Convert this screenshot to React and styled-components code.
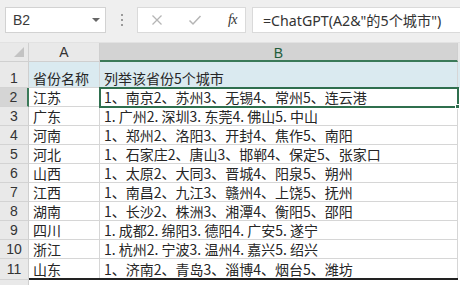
import React from "react";
import styled, { createGlobalStyle } from "styled-components";

const Global = createGlobalStyle`
  html, body { margin: 0; padding: 0; background: #ffffff; }
  body { width: 460px; height: 285px; overflow: hidden; font-family: "Noto Sans CJK SC", "Noto Sans", sans-serif; }
  * { box-sizing: border-box; }
`;

const Page = styled.div`
  width: 460px;
  height: 285px;
  overflow: hidden;
  background: #fff;
`;

const Toolbar = styled.div`
  display: flex;
  align-items: flex-start;
  height: 43px;
  padding: 7px 0 0 5px;
  background: #efefef;
  border-bottom: 1px solid #e2e2e2;
`;

const NameBox = styled.div`
  position: relative;
  width: 101px;
  height: 26px;
  background: #fff;
  border: 1px solid #d2d2d2;
  display: flex;
  align-items: center;
  padding-left: 7px;
  font-family: "Liberation Sans", Arial, sans-serif;
  font-size: 14px;
  color: #3a3a3a;
`;

const Caret = styled.span`
  position: absolute;
  right: 5px;
  top: 10px;
  width: 0;
  height: 0;
  border-left: 4px solid transparent;
  border-right: 4px solid transparent;
  border-top: 4px solid #666;
`;

const Grip = styled.div`
  width: 31px;
  height: 26px;
  display: flex;
  flex-direction: column;
  align-items: center;
  justify-content: center;
  gap: 3px;
`;

const Dot = styled.span`
  width: 2px;
  height: 2px;
  background: #9a9a9a;
`;

const ActionBox = styled.div`
  width: 109px;
  height: 26px;
  background: #fff;
  border: 1px solid #dadada;
  display: flex;
  align-items: center;
  justify-content: space-between;
  padding: 0 8px 0 13px;
`;

const Fx = styled.span`
  font-family: "Liberation Serif", "Times New Roman", serif;
  font-style: italic;
  font-size: 14px;
  color: #333;
  letter-spacing: -0.5px;
`;

const FormulaInput = styled.div`
  flex: 1;
  height: 26px;
  margin-left: 6px;
  background: #fff;
  border: 1px solid #dadada;
  border-right: none;
  display: flex;
  align-items: center;
  padding-left: 10px;
  font-family: "Noto Sans", "Noto Sans CJK SC", sans-serif;
  font-size: 14.2px;
  color: #333;
  white-space: nowrap;
`;

const Sheet = styled.div`
  display: grid;
  grid-template-columns: 29px 71px 358px 2px;
  grid-template-rows: 19px 26px repeat(10, 19px) 2px 8px;
`;

const Corner = styled.div`
  position: relative;
  background: #e9e9e9;
  border-right: 1px solid #d0d0d0;
  border-bottom: 1px solid #d0d0d0;
  &::after {
    content: "";
    position: absolute;
    right: 4px;
    bottom: 4px;
    width: 0;
    height: 0;
    border-left: 10px solid transparent;
    border-bottom: 10px solid #c3c3c3;
  }
`;

const ColHead = styled.div`
  display: flex;
  align-items: center;
  justify-content: center;
  font-family: "Liberation Sans", Arial, sans-serif;
  font-size: 14px;
  background: ${(p) => (p.$active ? "#d3d3d3" : "#e9e9e9")};
  color: ${(p) => (p.$active ? "#1f5d3a" : "#333")};
  border-right: 1px solid #cfcfcf;
  border-bottom: ${(p) => (p.$active ? "2px solid #3b7a59" : "1px solid #cfcfcf")};
  padding-top: ${(p) => (p.$active ? "2px" : "0")};
`;

const Filler = styled.div`
  background: ${(p) => p.$bg || "#fff"};
`;

const RowHead = styled.div`
  display: flex;
  align-items: flex-end;
  justify-content: center;
  font-family: "Liberation Sans", Arial, sans-serif;
  font-size: 14px;
  line-height: 17px;
  color: #333;
  background: ${(p) => (p.$active ? "#d5d5d5" : "#e9e9e9")};
  border-bottom: ${(p) => (p.$last ? "none" : "1px solid #d3d3d3")};
  border-right: ${(p) => (p.$active ? "2px solid #3b7a59" : "1px solid #cfcfcf")};
`;

const BottomRule = styled.div`
  background: #222;
`;

const Cell = styled.div`
  position: relative;
  display: flex;
  align-items: flex-end;
  padding: 0 0 0 4px;
  font-size: 14px;
  line-height: 17px;
  color: #262626;
  white-space: nowrap;
  overflow: visible;
  background: ${(p) => (p.$header ? "#daeaf0" : "#fff")};
  border-right: 1px solid #d6d6d6;
  border-bottom: ${(p) => (p.$last ? "none" : "1px solid #d6d6d6")};
  ${(p) =>
    p.$selected &&
    `
    outline: 2px solid #2f6f4e;
    outline-offset: -1px;
    z-index: 1;
  `}
`;

const Handle = styled.span`
  position: absolute;
  right: -3px;
  bottom: -3px;
  width: 5px;
  height: 5px;
  background: #2f6f4e;
  border: 1px solid #fff;
`;

const rows = [
  ["江苏", "1、南京2、苏州3、无锡4、常州5、连云港"],
  ["广东", "1. 广州2. 深圳3. 东莞4. 佛山5. 中山"],
  ["河南", "1、郑州2、洛阳3、开封4、焦作5、南阳"],
  ["河北", "1、石家庄2、唐山3、邯郸4、保定5、张家口"],
  ["山西", "1、太原2、大同3、晋城4、阳泉5、朔州"],
  ["江西", "1、南昌2、九江3、赣州4、上饶5、抚州"],
  ["湖南", "1、长沙2、株洲3、湘潭4、衡阳5、邵阳"],
  ["四川", "1. 成都2. 绵阳3. 德阳4. 广安5. 遂宁"],
  ["浙江", "1. 杭州2. 宁波3. 温州4. 嘉兴5. 绍兴"],
  ["山东", "1、济南2、青岛3、淄博4、烟台5、潍坊"],
];

const XIcon = () => (
  <svg width="12" height="12" viewBox="0 0 12 12">
    <path d="M1.5 1.5 L10.5 10.5 M10.5 1.5 L1.5 10.5" stroke="#b5b5b5" strokeWidth="1.3" fill="none" />
  </svg>
);

const CheckIcon = () => (
  <svg width="14" height="12" viewBox="0 0 14 12">
    <path d="M1.5 6.5 L5 10 L12.5 2" stroke="#b5b5b5" strokeWidth="1.5" fill="none" />
  </svg>
);

export default function App() {
  return (
    <Page>
      <Global />
      <Toolbar>
        <NameBox>
          B2
          <Caret />
        </NameBox>
        <Grip>
          <Dot />
          <Dot />
          <Dot />
        </Grip>
        <ActionBox>
          <XIcon />
          <CheckIcon />
          <Fx>fx</Fx>
        </ActionBox>
        <FormulaInput>=ChatGPT(A2&amp;"的5个城市")</FormulaInput>
      </Toolbar>
      <Sheet>
        <Corner />
        <ColHead>A</ColHead>
        <ColHead $active>B</ColHead>
        <Filler $bg="#e9e9e9" />

        <RowHead>1</RowHead>
        <Cell $header>省份名称</Cell>
        <Cell $header>列举该省份5个城市</Cell>
        <Filler $bg="#daeaf0" />

        {rows.map(([p, c], i) => {
          const n = i + 2;
          const last = n === 11;
          return (
            <React.Fragment key={n}>
              <RowHead $active={n === 2} $last={last}>{n}</RowHead>
              <Cell $last={last}>{p}</Cell>
              <Cell $last={last} $selected={n === 2}>
                {c}
                {n === 2 && <Handle />}
              </Cell>
              <Filler />
            </React.Fragment>
          );
        })}
        <RowHead />
        <BottomRule />
        <BottomRule />
        <Filler />

        <RowHead />
        <Filler />
        <Filler />
        <Filler />
      </Sheet>
    </Page>
  );
}
